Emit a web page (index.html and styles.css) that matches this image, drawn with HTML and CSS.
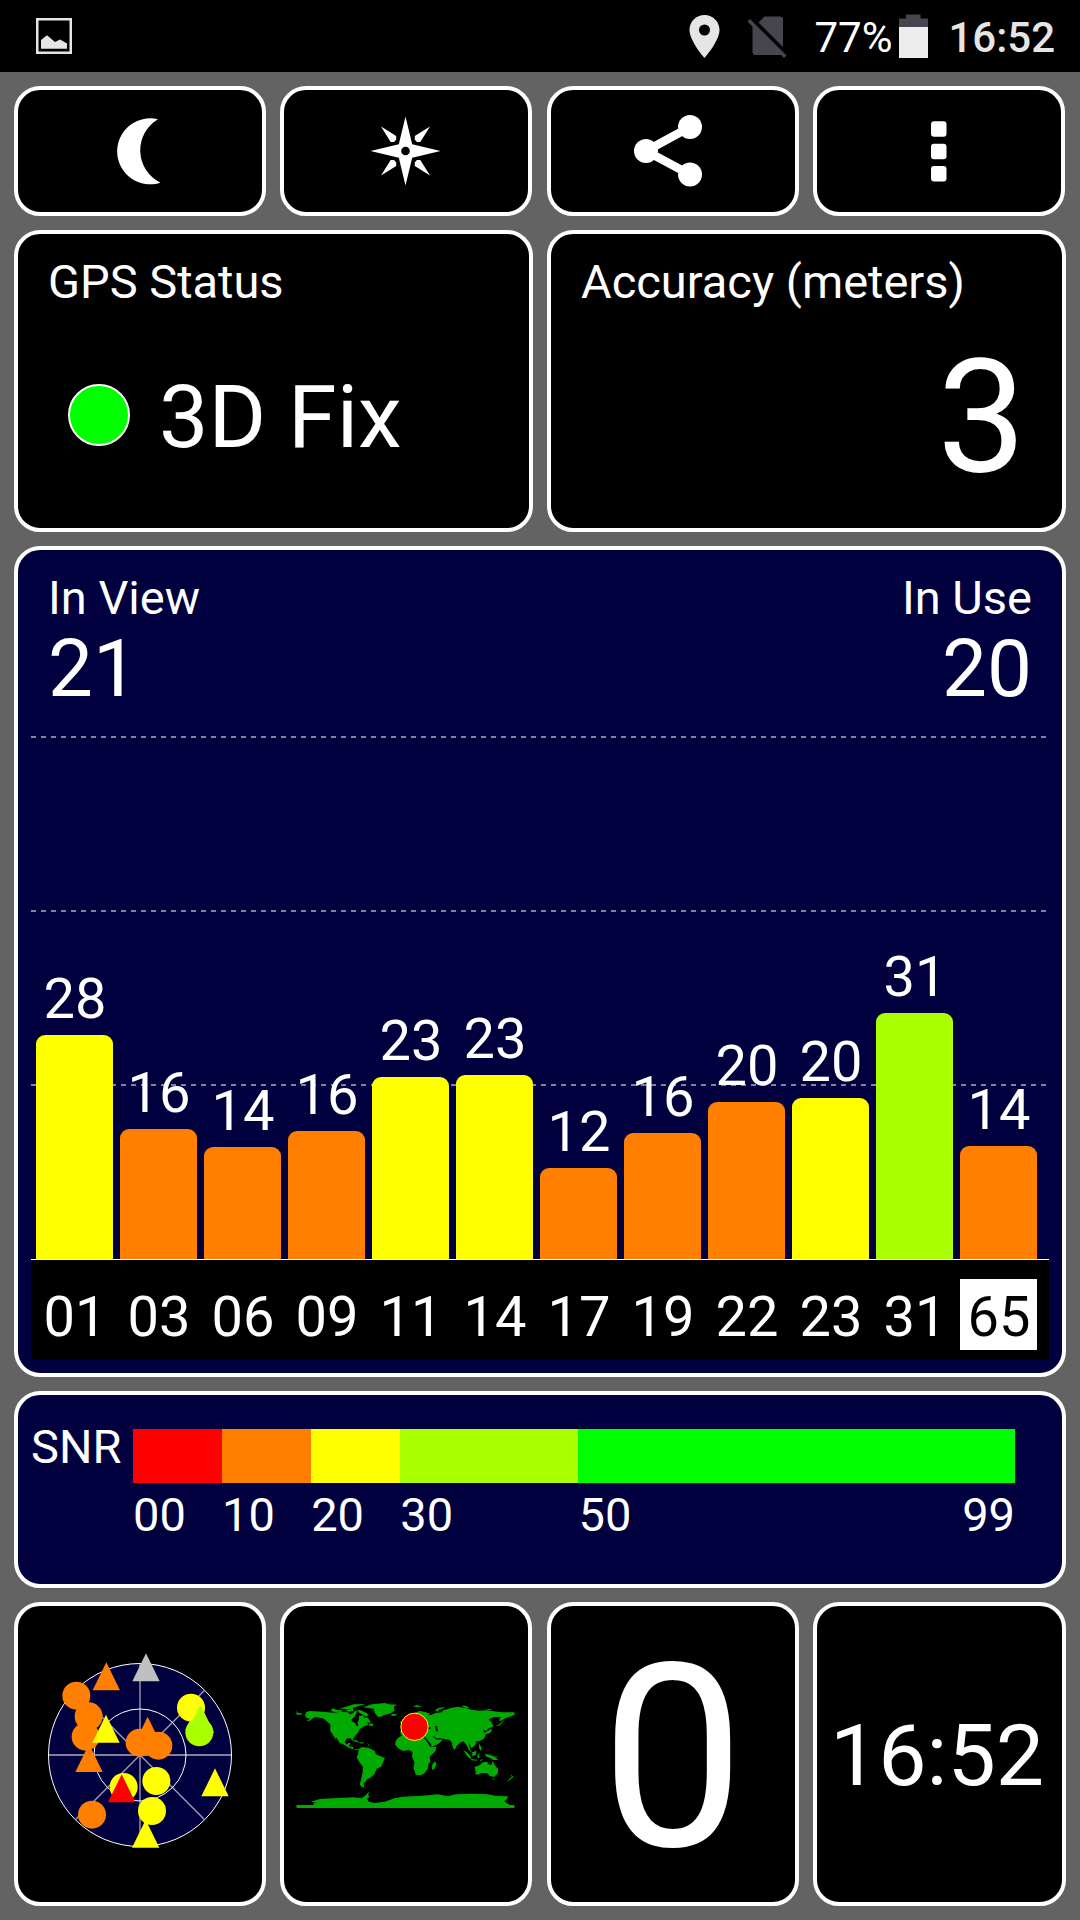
FILE: index.html
```html
<!DOCTYPE html>
<html lang="en">
<head>
    <meta charset="UTF-8">
    <meta name="viewport" content="width=device-width, initial-scale=1.0">
    <title>GPS Test</title>
    <link rel="stylesheet" href="styles.css">
</head>
<body>
<header class="status-bar">
    <svg class="icon-picture" width="36" height="36" viewBox="0 0 36 36">
        <rect x="1.25" y="1.25" width="33.5" height="33.5" fill="none" stroke="#e5e5e5" stroke-width="2.5"/>
        <path d="M5 22 L11 17.3 L19 24 L24 21.5 L31 25.5 V30.7 H5 Z" fill="#e5e5e5"/>
    </svg>
    <div class="status-right">
        <svg class="icon-pin" width="31" height="43" viewBox="0 0 31 43">
            <path fill="#e5e5e5" fill-rule="evenodd" d="M15.5 0 C7 0 0.5 6.700 0.500 15 C0.500 26 15.500 43 15.500 43 C15.500 43 30.500 26 30.500 15 C30.500 6.700 24 0 15.500 0 Z M15.500 9.500 A5.500 5.500 0 1 1 15.500 20.500 A5.500 5.500 0 1 1 15.500 9.500 Z"/>
        </svg>
        <svg class="icon-sim" width="40" height="43" viewBox="0 0 40 43">
            <path fill="#47464e" d="M11.500 7.500 L17.500 1.500 H33 Q36 1.500 36 4.500 V32 Z"/>
            <path fill="#47464e" d="M3 4 L0.500 6.500 L5.500 11.500 V37 Q5.500 40 8.500 40 H34 L37 43 L39.500 40.500 Z"/>
        </svg>
        <span class="battery-text">77%</span>
        <svg class="icon-battery" width="29" height="44" viewBox="0 0 29 44">
            <path fill="#47464e" d="M7 0.500 H21.500 V4.500 H29 V13 H0 V4.500 H7 Z"/>
            <rect y="13" width="29" height="31" fill="#ededee"/>
        </svg>
        <span class="clock">16:52</span>
    </div>
</header>

<main class="dashboard">
    <div class="row row-buttons">
        <button class="card" aria-label="Night mode">
            <svg width="80" height="80" viewBox="0 0 80 80" fill="#fff">
                <path d="M58 8.300 A33 33 0 1 0 60.500 71.700 A36 36 0 0 1 58 8.300 Z"/>
            </svg>
        </button>
        <button class="card" aria-label="Compass">
            <svg width="80" height="80" viewBox="-39.500 -40 80 80" fill="#fff">
                <path d="M0 -34.500 L6.700 -6.700 L35 0 L6.700 6.700 L0 34.500 L-6.700 6.700 L-35 0 L-6.700 -6.700 Z"/>
                <circle r="4.300" fill="#000"/>
                <path d="M-24.500 -24.500 L-9.300 -15 L-9.300 -11.500 L-11.400 -9 L-14.800 -9 Z"/>
                <path d="M24.500 -24.500 L9.300 -15 L9.300 -11.500 L11.400 -9 L14.800 -9 Z"/>
                <path d="M-24.500 24.500 L-9.300 15 L-9.300 11.500 L-11.400 9 L-14.800 9 Z"/>
                <path d="M24.500 24.500 L9.300 15 L9.300 11.500 L11.400 9 L14.800 9 Z"/>
            </svg>
        </button>
        <button class="card" aria-label="Share">
            <svg width="80" height="80" viewBox="-0.500 0 80 80" fill="#fff">
                <path d="M56.500 16 L12.500 40 L56.500 63.600" fill="none" stroke="#fff" stroke-width="8.500"/>
                <circle cx="12.500" cy="40" r="12"/>
                <circle cx="56.500" cy="16" r="12"/>
                <circle cx="56.500" cy="63.600" r="12"/>
            </svg>
        </button>
        <button class="card" aria-label="Menu">
            <svg width="80" height="80" viewBox="-0.500 0 80 80" fill="#fff">
                <rect x="31.500" y="10.200" width="15.500" height="15.500" rx="3"/>
                <rect x="31.500" y="32.700" width="15.500" height="15.500" rx="3"/>
                <rect x="31.500" y="55" width="15.500" height="15.500" rx="3"/>
            </svg>
        </button>
    </div>

    <div class="row row-status">
        <section class="card panel">
            <div class="label">GPS Status</div>
            <div class="fix">
                <span class="fix-dot"></span>
                <span class="fix-text">3D Fix</span>
            </div>
        </section>
        <section class="card panel">
            <div class="label">Accuracy (meters)</div>
            <div class="accuracy">3</div>
        </section>
    </div>

    <section class="card blue chart">
        <div class="chart-head">
            <div>
                <div class="label">In View</div>
                <div class="count">21</div>
            </div>
            <div class="in-use">
                <div class="label">In Use</div>
                <div class="count">20</div>
            </div>
        </div>
        <div class="plot">
            <div class="col"><span class="value">28</span><div class="bar yellow" style="height: 224px"></div></div>
            <div class="col"><span class="value">16</span><div class="bar orange" style="height: 130px"></div></div>
            <div class="col"><span class="value">14</span><div class="bar orange" style="height: 112px"></div></div>
            <div class="col"><span class="value">16</span><div class="bar orange" style="height: 128px"></div></div>
            <div class="col"><span class="value">23</span><div class="bar yellow" style="height: 182px"></div></div>
            <div class="col"><span class="value">23</span><div class="bar yellow" style="height: 184px"></div></div>
            <div class="col"><span class="value">12</span><div class="bar orange" style="height: 91px"></div></div>
            <div class="col"><span class="value">16</span><div class="bar orange" style="height: 126px"></div></div>
            <div class="col"><span class="value">20</span><div class="bar orange" style="height: 157px"></div></div>
            <div class="col"><span class="value">20</span><div class="bar yellow" style="height: 161px"></div></div>
            <div class="col"><span class="value">31</span><div class="bar lime" style="height: 246px"></div></div>
            <div class="col"><span class="value">14</span><div class="bar orange" style="height: 113px"></div></div>
        </div>
        <div class="axis">
            <span>01</span>
            <span>03</span>
            <span>06</span>
            <span>09</span>
            <span>11</span>
            <span>14</span>
            <span>17</span>
            <span>19</span>
            <span>22</span>
            <span>23</span>
            <span>31</span>
            <span class="glonass">65</span>
        </div>
    </section>

    <section class="card blue snr">
        <div class="snr-label">SNR</div>
        <div class="scale">
            <div class="step w10"><div class="swatch red"></div><div class="ticks">00</div></div>
            <div class="step w10"><div class="swatch orange"></div><div class="ticks">10</div></div>
            <div class="step w10"><div class="swatch yellow"></div><div class="ticks">20</div></div>
            <div class="step w20"><div class="swatch lime"></div><div class="ticks">30</div></div>
            <div class="step w49"><div class="swatch green"></div><div class="ticks"><span>50</span><span>99</span></div></div>
        </div>
    </section>

    <div class="row row-bottom">
        <!-- sky view: circles are GPS, triangles are GLONASS -->
        <section class="card">
            <svg width="244" height="202" viewBox="54 157 732 606">
                <circle cx="420" cy="463" r="274.500" fill="#00003f" stroke="#fff" stroke-width="3"/>
                <path d="M420 189 V737 M226 269 L614 657 M614 269 L226 657" stroke="#a0a0b8" stroke-width="4"/>
                <circle cx="420" cy="463" r="138" fill="none" stroke="#fff" stroke-width="3"/>
                <path d="M145 463 H695" stroke="#fff" stroke-width="3"/>
                <g fill="#ff8000">
                    <circle cx="229" cy="285" r="42"/>
                    <circle cx="266" cy="347" r="42"/>
                    <circle cx="257" cy="408" r="42"/>
                    <path d="M319 185 l41 84 h-82 Z"/>
                    <path d="M267 430 l41 84 h-82 Z"/>
                    <path d="M443 348 l41 84 h-82 Z"/>
                    <circle cx="419" cy="426" r="42"/>
                    <circle cx="475" cy="435" r="42"/>
                    <circle cx="276" cy="642" r="42"/>
                </g>
                <g fill="#ffff00">
                    <circle cx="573" cy="321" r="42"/>
                    <path d="M597 304 l41 84 h-82 Z"/>
                    <path d="M318 342 l41 84 h-82 Z"/>
                    <circle cx="371" cy="559" r="42"/>
                    <circle cx="469" cy="541" r="42"/>
                    <circle cx="456" cy="631" r="42"/>
                    <path d="M437 657 l41 84 h-82 Z"/>
                    <path d="M645 503 l41 84 h-82 Z"/>
                </g>
                <circle cx="598" cy="395" r="42" fill="#aaff00"/>
                <path d="M601 313 l41 84 h-82 Z" fill="#aaff00"/>
                <path d="M438 158 l41 84 h-82 Z" fill="#c0c0c0"/>
                <path d="M365 521 l41 84 h-82 Z" fill="#ff0000"/>
            </svg>
        </section>
        <!-- world map -->
        <section class="card">
            <svg width="244" height="150" viewBox="13.500 -3 732 450">
                <g fill="#00aa00">
                    <!-- North America -->
                    <path d="M51 91 L54 98 L68 101 L68 104 L51 104 Z M76 102 L82 101 L78 97 L90 93 L130 95 L160 98 L184 95 L205 97 L212 103 L222 98 L227 92 L233 92 L229 104 L224 112 L217 117 L216 124 L226 128 L232 139 L236 137 L234 126 L239 119 L238 108 L249 106 L257 114 L263 111 L274 127 L263 129 L266 134 L282 138 L277 139 L265 135 L253 139 L241 147 L234 160 L222 173 L219 183 L213 174 L201 176 L196 186 L201 194 L207 189 L213 189 L208 199 L220 201 L223 209 L234 206 L236 209 L227 210 L208 203 L190 193 L180 188 L172 174 L167 172 L174 185 L168 178 L160 164 L152 152 L153 134 L142 124 L130 115 L118 113 L108 111 L100 115 L90 123 L80 124 L92 116 L82 114 L78 109 Z"/>
                    <path d="M232 90 L244 91 L260 98 L268 104 L260 110 L250 104 L240 99 Z M153 92 L160 85 L172 90 L190 91 L186 95 L165 96 Z M178 86 L205 79 L222 73 L258 72 L240 77 L222 83 L218 89 L190 86 Z M198 91 L223 88 L222 94 L207 95 Z M216 180 L231 181 L240 188 L228 185 Z M240 186 L253 188 L252 191 L241 190 Z M263 189 L269 195 L268 198 Z M270 129 L282 133 L279 138 L269 136 Z"/>
                    <!-- Greenland, Iceland -->
                    <path d="M252 82 L277 73 L316 69 L329 73 L353 74 L343 80 L345 92 L333 100 L316 104 L303 111 L295 110 L286 99 L282 86 L265 84 Z M334 103 L351 102 L353 105 L343 108 L337 107 Z"/>
                    <!-- South America -->
                    <path d="M237 208 L247 201 L268 204 L286 213 L289 223 L316 234 L312 244 L305 260 L291 267 L285 281 L273 293 L263 298 L258 305 L252 309 L254 322 L246 321 L241 313 L245 297 L249 280 L250 260 L240 247 L231 232 L235 224 Z M253 321 L260 323 L258 325 Z"/>
                    <!-- Europe and Asia -->
                    <path d="M364 164 L362 152 L370 146 L368 140 L379 135 L386 127 L393 123 L390 112 L404 99 L420 93 L437 96 L454 102 L445 104 L455 105 L468 99 L486 97 L492 91 L514 84 L535 80 L560 84 L576 89 L598 92 L622 91 L643 94 L668 97 L705 97 L705 105 L690 110 L678 115 L664 122 L659 124 L661 115 L667 110 L650 111 L636 114 L628 119 L636 127 L640 140 L628 145 L622 149 L627 158 L619 151 L610 151 L619 164 L613 176 L600 183 L589 185 L589 192 L581 202 L575 203 L568 190 L571 207 L578 218 L568 210 L561 194 L551 184 L544 187 L531 198 L526 210 L521 204 L515 184 L505 178 L487 176 L486 184 L470 196 L456 200 L448 189 L436 173 L430 170 L431 160 L444 159 L430 153 L416 160 L408 161 L397 157 L390 152 L382 158 L373 165 Z"/>
                    <path d="M399 79 L412 76 L428 79 L414 82 Z M466 92 L476 84 L498 81 L488 86 L475 91 L479 96 Z M545 77 L559 77 L570 84 L557 83 Z M616 88 L640 87 L630 91 Z M367 117 L374 119 L380 134 L369 137 L374 128 Z M360 125 L366 124 L365 131 Z M520 203 L526 207 L526 210 Z M588 189 L593 189 L589 192 Z M616 158 L629 151 L635 145 L637 153 L630 160 L619 163 L612 159 Z M647 139 L661 132 L673 117 L671 124 L662 136 Z M635 121 L638 130 L639 140 L642 138 Z"/>
                    <!-- Africa -->
                    <path d="M371 164 L387 161 L407 160 L419 169 L433 172 L442 185 L453 201 L471 201 L468 213 L450 231 L453 246 L447 251 L445 266 L435 280 L424 286 L409 284 L402 264 L405 247 L398 232 L399 216 L388 210 L370 213 L356 205 L347 194 L348 184 L356 173 Z M467 244 L471 253 L465 267 L458 269 L456 260 L460 251 Z"/>
                    <!-- Indonesia, Philippines -->
                    <path d="M551 210 L566 220 L576 234 L572 236 L562 227 Z M578 217 L591 212 L589 226 L578 228 Z M573 236 L590 239 L596 242 L577 241 Z M594 223 L603 220 L597 225 L602 233 L594 233 Z M598 191 L602 195 L607 206 L604 212 L599 205 Z M615 223 L625 223 L644 229 L656 240 L641 240 L632 234 L621 230 Z M600 240 L612 238 L604 243 Z M646 228 L654 231 L650 233 Z"/>
                    <!-- Australia, New Zealand -->
                    <path d="M585 261 L601 255 L610 247 L624 245 L625 252 L636 255 L640 242 L645 255 L656 267 L655 280 L644 291 L631 288 L623 279 L607 279 L594 284 L587 282 L589 275 Z M638 295 L645 295 L641 299 Z M693 283 L702 291 L694 297 L682 306 L691 295 L697 291 Z"/>
                    <!-- Antarctica -->
                    <path d="M51 375 H102 V369 H113 L94 365 L121 357 L160 355 L195 353 L222 352 L246 355 L255 349 L265 339 L271 334 L266 344 L270 350 L262 357 L268 365 L285 369 L315 365 L345 355 L370 350 L415 348 L445 346 L475 343 L504 349 L530 343 L580 341 L625 343 L650 348 L686 349 L683 357 L674 364 L686 372 L690 375 H705 V384 H51 Z"/>
                </g>
                <g fill="#000">
                    <path d="M446 142 L452 142 L453 146 L445 146 Z M466 139 L474 138 L473 145 L476 154 L469 154 L469 146 Z M434 172 L439 173 L456 194 L453 197 Z M459 167 L472 175 L486 174 L484 178 L470 179 Z"/>
                </g>
                <circle cx="405" cy="140.500" r="41" fill="#ff0000" stroke="#ffff00" stroke-width="3"/>
            </svg>
        </section>
        <section class="card speed">0</section>
        <section class="card time">16:52</section>
    </div>
</main>
</body>
</html>
```
FILE: styles.css
```css
* {
    box-sizing: border-box;
}

body {
    margin: 0;
    height: 1920px;
    display: flex;
    flex-direction: column;
    background-color: #636363;
    color: #fff;
    font-family: Roboto, "Liberation Sans", sans-serif;
    font-size: 47px;
    line-height: 48px;
    overflow: hidden;
}

svg {
    display: block;
}

/* system bar */
.status-bar {
    height: 72px;
    display: flex;
    justify-content: space-between;
    align-items: center;
    padding: 0 25px 0 36px;
    background-color: #000;
    font-size: 42px;
}

.status-right {
    display: flex;
    align-items: center;
}

.icon-sim {
    margin: 0 27px;
}

.battery-text,
.clock {
    padding-top: 4px;
}

.icon-battery {
    margin: 0 20px 0 7px;
}

.clock {
    color: #e5e5e5;
    font-weight: 500;
}

/* grid of cards */
.dashboard {
    flex: 1;
    display: flex;
    flex-direction: column;
    gap: 14px;
    padding: 14px;
}

.row {
    display: grid;
    gap: 14px;
}

.row-buttons {
    grid-template-columns: repeat(4, 252px);
    column-gap: 14.33px;
    height: 130px;
}

.row-status {
    grid-template-columns: repeat(2, 1fr);
    height: 302px;
}

.row-bottom {
    grid-template-columns: repeat(3, 252px) 1fr;
    column-gap: 14.33px;
    height: 304px;
}

.card {
    min-width: 0;
    display: flex;
    align-items: center;
    justify-content: center;
    padding: 0;
    border: 4px solid #fff;
    border-radius: 26px;
    background-color: #000;
    color: #fff;
}

.blue {
    background-color: #00003f;
}

.panel {
    display: block;
    padding: 24px 30px 0;
}

.fix {
    display: flex;
    gap: 29px;
    margin: 67px 0 0 20px;
    font-size: 88px;
    line-height: 88px;
}

.fix-dot {
    width: 62px;
    height: 62px;
    margin-top: 11px;
    border: 2px solid #fff;
    border-radius: 50%;
    background-color: #00ff00;
}

.accuracy {
    margin-top: 32px;
    padding-right: 6px;
    font-size: 158px;
    line-height: 158px;
    text-align: right;
}

/* satellite signal chart */
.chart {
    display: block;
    height: 831px;
    padding: 24px 13px 0;
}

.chart-head {
    display: flex;
    justify-content: space-between;
    height: 135px;
    padding: 0 17px;
}

.in-use {
    text-align: right;
}

.count {
    margin-top: 7px;
    font-size: 80px;
    line-height: 80px;
}

.plot {
    --dash: repeating-linear-gradient(90deg, #80809f 0, #80809f 5px, transparent 5px, transparent 10px);
    display: flex;
    align-items: flex-end;
    gap: 7px;
    height: 551px;
    padding: 0 12px 0 5px;
    border-bottom: 1px solid #fff;
    background-image: var(--dash), var(--dash), var(--dash);
    background-size: 100% 2px;
    background-position: 0 27px, 0 201px, 0 375px;
    background-repeat: no-repeat;
}

.col {
    width: 77px;
    text-align: center;
    font-size: 56px;
    line-height: 56px;
}

.value {
    display: block;
    margin-bottom: 8px;
    padding-left: 1px;
}

.bar {
    border-radius: 9px 9px 0 0;
}

.axis {
    display: flex;
    gap: 7px;
    height: 100px;
    padding: 19px 12px 0 5px;
    background-color: #000;
    font-size: 56px;
    line-height: 76px;
    text-align: center;
}

.axis span {
    width: 77px;
    height: 71px;
    padding-left: 1px;
}

.axis .glonass {
    background-color: #fff;
    color: #000;
}

.red { background-color: #ff0000; }
.orange { background-color: #ff8000; }
.yellow { background-color: #ffff00; }
.lime { background-color: #aaff00; }
.green { background-color: #00ff00; }

/* SNR legend */
.snr {
    height: 197px;
    align-items: flex-start;
    justify-content: flex-start;
    padding: 28px 47px 0 13px;
}

.snr-label {
    width: 102px;
}

.scale {
    flex: 1;
    display: flex;
    padding-top: 6px;
}

.step {
    flex: 10 1 0;
    min-width: 0;
}

.w20 { flex-grow: 20; }
.w49 { flex-grow: 49; }

.swatch {
    height: 54px;
}

.ticks {
    display: flex;
    justify-content: space-between;
    margin-top: 8px;
}

.speed {
    padding-top: 10px;
    font-size: 256px;
    line-height: 256px;
}

.time {
    padding: 3px 5px 0 0;
    font-size: 86px;
    line-height: 88px;
}
```
